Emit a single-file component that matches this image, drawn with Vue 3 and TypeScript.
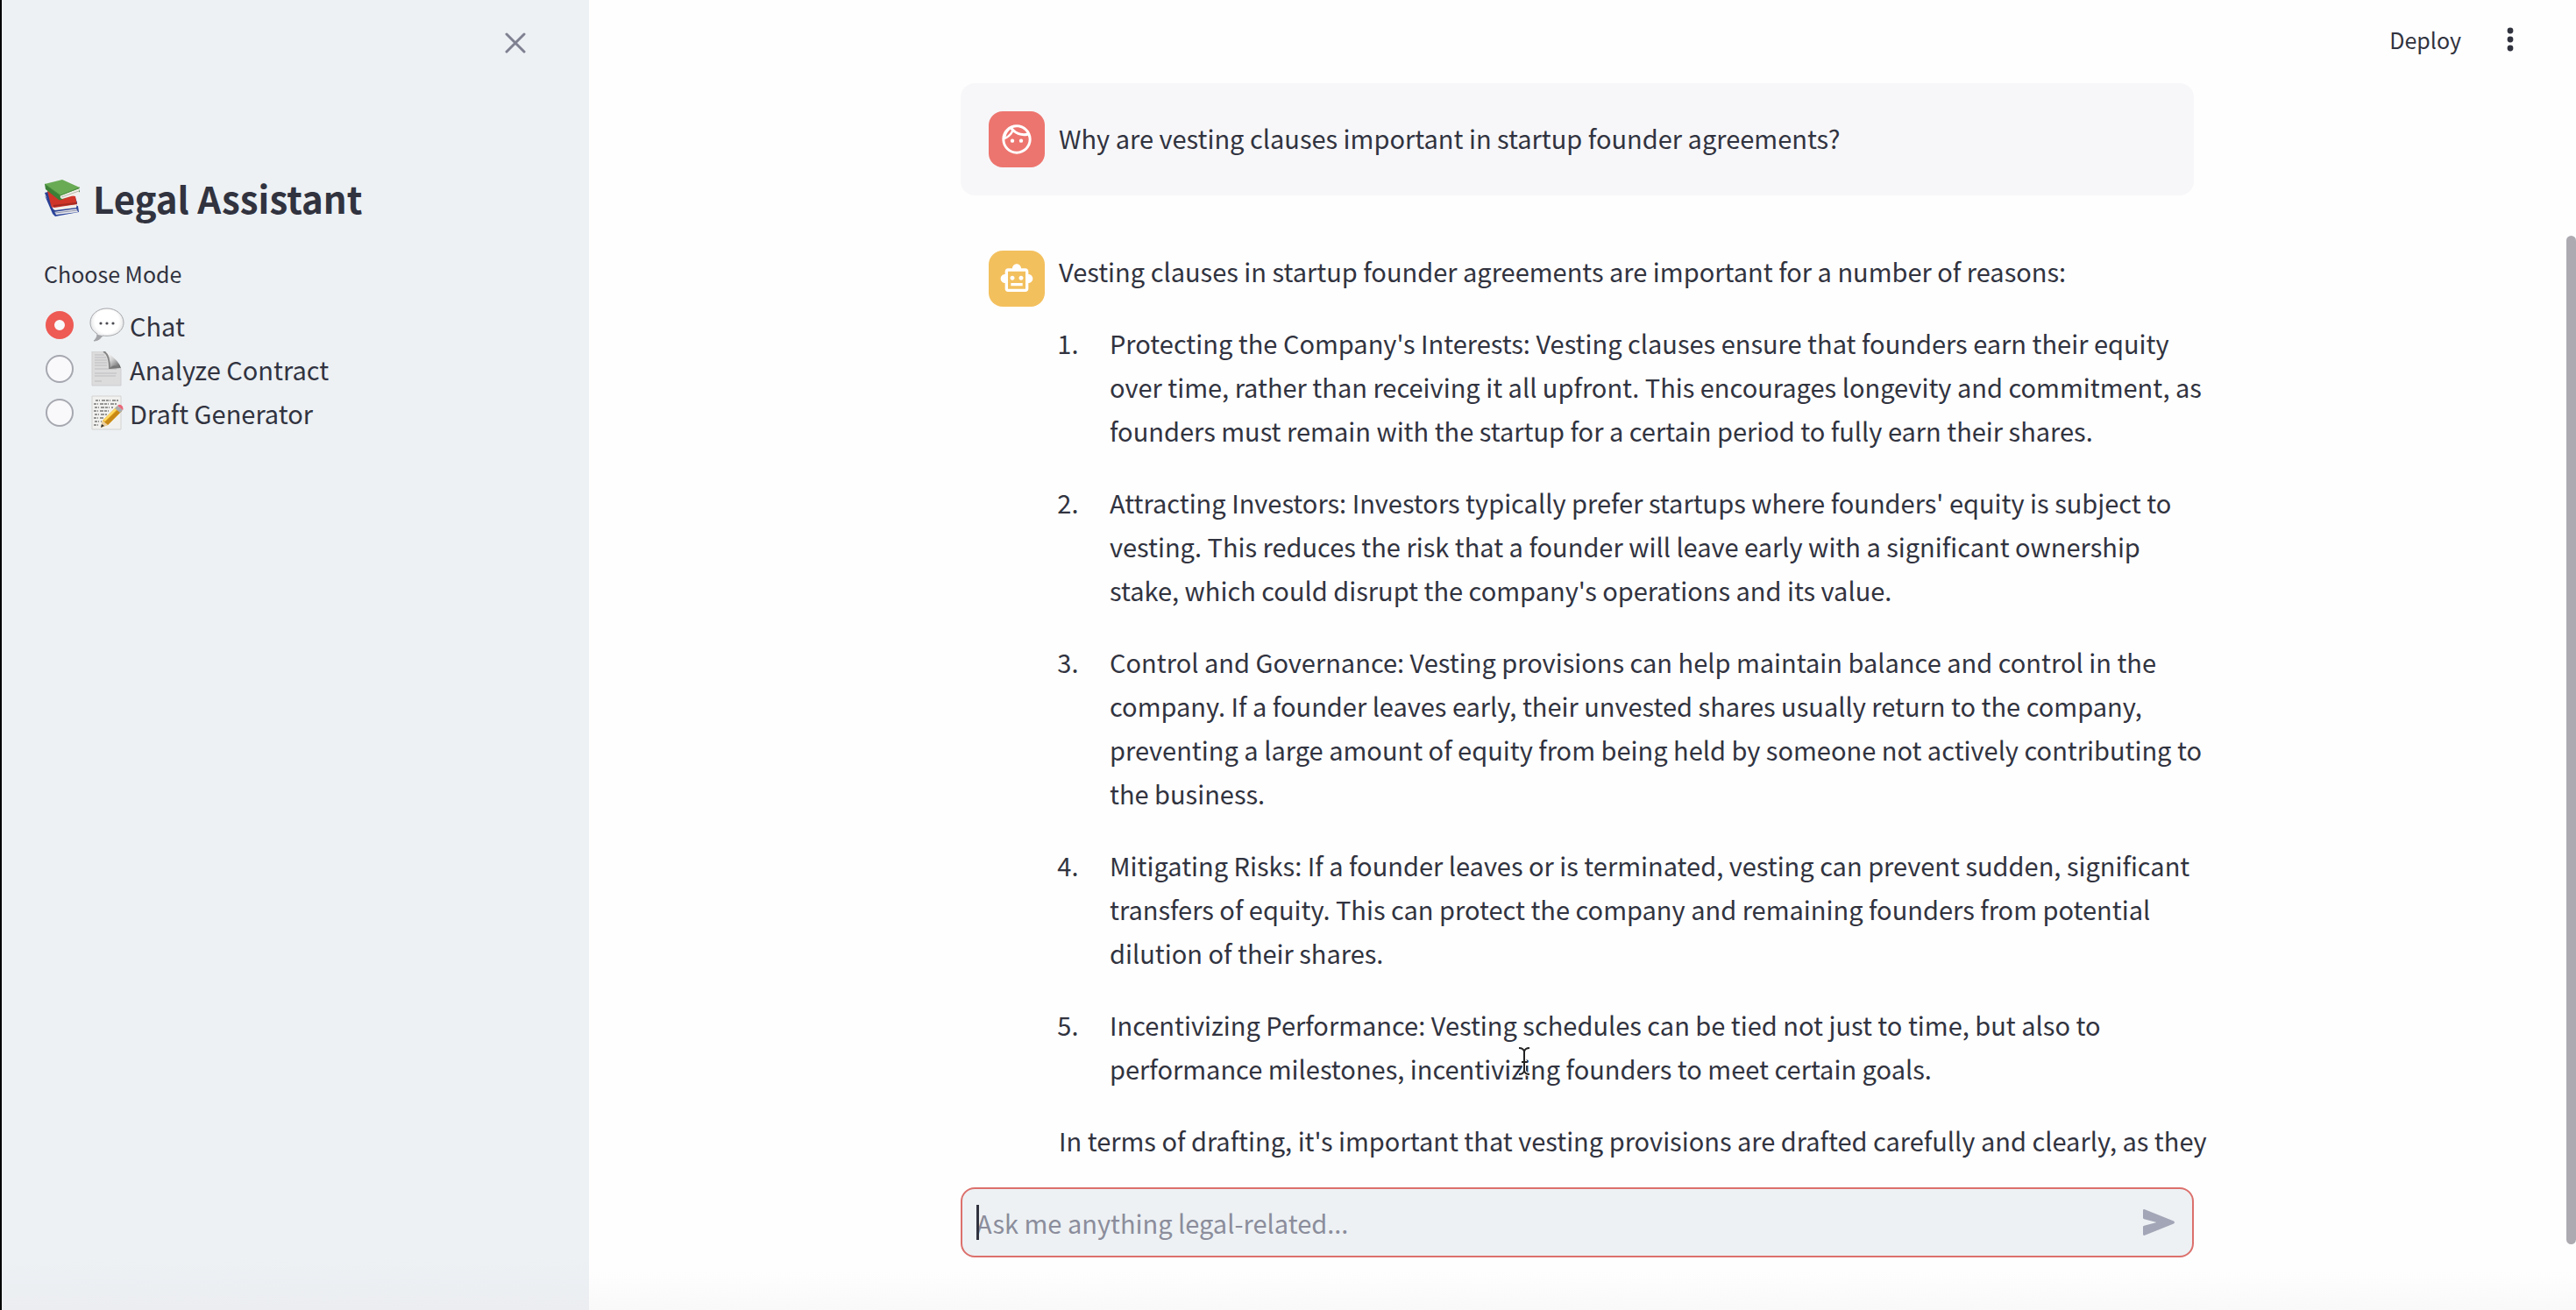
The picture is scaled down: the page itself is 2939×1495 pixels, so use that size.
<script setup lang="ts">
import { ref } from 'vue'

type Mode = 'chat' | 'analyze' | 'draft'

const mode = ref<Mode>('chat')
const question = ref('')

const modes: { id: Mode; label: string }[] = [
  { id: 'chat', label: 'Chat' },
  { id: 'analyze', label: 'Analyze Contract' },
  { id: 'draft', label: 'Draft Generator' },
]

const reasons: string[] = [
  "Protecting the Company's Interests: Vesting clauses ensure that founders earn their equity over time, rather than receiving it all upfront. This encourages longevity and commitment, as founders must remain with the startup for a certain period to fully earn their shares.",
  "Attracting Investors: Investors typically prefer startups where founders' equity is subject to vesting. This reduces the risk that a founder will leave early with a significant ownership stake, which could disrupt the company's operations and its value.",
  'Control and Governance: Vesting provisions can help maintain balance and control in the company. If a founder leaves early, their unvested shares usually return to the company, preventing a large amount of equity from being held by someone not actively contributing to the business.',
  'Mitigating Risks: If a founder leaves or is terminated, vesting can prevent sudden, significant transfers of equity. This can protect the company and remaining founders from potential dilution of their shares.',
  'Incentivizing Performance: Vesting schedules can be tied not just to time, but also to performance milestones, incentivizing founders to meet certain goals.',
]
</script>

<template>
  <div class="app">
    <aside class="sidebar">
      <div class="sidebar-top">
        <button class="icon-button" type="button" aria-label="Close sidebar">
          <svg width="24" height="24" viewBox="0 0 24 24" fill="none" stroke="#7f8191" stroke-width="3" stroke-linecap="round">
            <path d="M2 2 22 22M22 2 2 22" />
          </svg>
        </button>
      </div>

      <h1 class="title">
        <svg width="42" height="44" viewBox="0 0 42 44" aria-hidden="true">
          <path d="M1 19 12 34 39 31 40 38 13 43 10 40Z" fill="#2c459c" />
          <path d="M12 37 37 34 39 38 14 41Z" fill="#e9e9ee" />
          <path d="M13 39 38 36" stroke="#8c92aa" stroke-width="1" />
          <path d="M1 16 8 14 36 22 38 27 38 34 11 38 8 34Z" fill="#2a3f91" />
          <path d="M4 14 8 30Q9 34 12 34L38 30 36 20Z" fill="#cf3528" />
          <path d="M10 29Q9 33 12 33L38 29 37 33 13 36Q9 35 10 29Z" fill="#f1eeea" />
          <path d="M11 31 37 28" stroke="#a42a22" stroke-width="2" />
          <path d="M1 6 2 12 17 24Q20 25 22 23L41 15 40 11Z" fill="#3c7f36" />
          <path d="M19 19 41 11Q39 14 41 17L21 23Q18 22 19 19Z" fill="#f2f0e8" />
          <path d="M20 21 40 14" stroke="#b7b5ac" stroke-width="1" />
          <path d="M1 6 21 1 41 10 19 19Z" fill="#69ab55" />
          <path d="M1 6 19 19 41 10" fill="none" stroke="#4b913f" stroke-width="1" />
        </svg>
        <span>Legal Assistant</span>
      </h1>

      <fieldset class="modes">
        <legend>Choose Mode</legend>
        <label v-for="item in modes" :key="item.id" class="mode">
          <input v-model="mode" type="radio" name="mode" :value="item.id" />
          <svg v-if="item.id === 'chat'" width="40" height="40" viewBox="0 0 40 40" aria-hidden="true">
            <defs>
              <radialGradient id="bubble" cx=".5" cy=".4" r=".6">
                <stop offset=".6" stop-color="#fff" />
                <stop offset="1" stop-color="#d5d6d9" />
              </radialGradient>
            </defs>
            <path d="M20 1C9.500 1 1 8 1 17c0 6 3 10 8 13 0 4-2 6-4 8 5 0 8-3 10-6 14 2 24-5 24-15C39 8 30.500 1 20 1Z" fill="url(#bubble)" stroke="#a5a6aa" stroke-width="1" />
            <path d="M9 31c0 3-2 5-4 7 5 0 8-3 10-6Z" fill="#a2a3a7" />
            <g fill="#4b4c52">
              <circle cx="13" cy="18" r="1.600" />
              <circle cx="20" cy="18" r="1.600" />
              <circle cx="27" cy="18" r="1.600" />
            </g>
          </svg>
          <svg v-else-if="item.id === 'analyze'" width="40" height="40" viewBox="0 0 40 40" aria-hidden="true">
            <defs>
              <linearGradient id="curl" x1="0" y1="0" x2="1" y2="1">
                <stop offset=".2" stop-color="#fafafa" />
                <stop offset=".5" stop-color="#d0d0d0" />
                <stop offset="1" stop-color="#4c4c4c" />
              </linearGradient>
            </defs>
            <path d="M3 0H18Q24 4 24 15 34 15 36 20V39H3Z" fill="#dcdcdd" stroke="#cfcfd0" stroke-width="1" />
            <path d="M6 4H17M6 7H19M6 10H20M6 13H20M6 16H20M6 20H31M6 25H31M6 28H30M6 34H14" stroke="#bdbdbf" stroke-width="1" />
            <path d="M15 0Q22 1 23 8V20Q30 15 36 19 34 11 20 1Z" fill="url(#curl)" />
            <path d="M16 0Q23 3 23 20" fill="none" stroke="#858585" stroke-width="2" />
            <path d="M23 20Q27 13 36 19Z" fill="#777" />
          </svg>
          <svg v-else width="40" height="40" viewBox="0 0 40 40" aria-hidden="true">
            <path d="M3 1H36V39H3Z" fill="#f1f1ef" stroke="#d2d2d1" stroke-width="1" />
            <g fill="none" stroke="#777" stroke-width="1.500" stroke-dasharray="3 1 1 2 4 1">
              <path d="M7 6H33M5 10H31M6 14H27M5 18H24M6 22H20M5 26H17M6 30H14M5 34H12" />
            </g>
            <path d="M13 37 15 29 31 13 37 18 21 34Z" fill="#efb82f" />
            <path d="M17 31 34 15 37 18 21 34Z" fill="#c98916" />
            <path d="M17 29 32 14" stroke="#ffdc67" stroke-width="2" />
            <path d="M13 37 15 29 21 34Z" fill="#ead0a2" />
            <path d="M13 37 14 33 17 35Z" fill="#333" />
            <path d="M29 15 32 12 38 17 35 20Z" fill="#a9adb0" />
            <path d="M32 12Q35 9 38 13 39 16 38 17Z" fill="#e9697a" />
          </svg>
          <span>{{ item.label }}</span>
        </label>
      </fieldset>
    </aside>

    <main class="main">
      <header class="toolbar">
        <button class="deploy" type="button">Deploy</button>
        <button class="icon-button" type="button" aria-label="Menu">
          <svg width="8" height="28" viewBox="0 0 8 28" fill="#31333f">
            <circle cx="4" cy="4" r="3.400" />
            <circle cx="4" cy="14" r="3.400" />
            <circle cx="4" cy="24" r="3.400" />
          </svg>
        </button>
      </header>

      <div class="column">
        <article class="message user">
          <div class="avatar avatar-user">
            <svg width="40" height="40" viewBox="0 0 24 24" fill="#fff" aria-hidden="true">
              <path d="M12 2C6.480 2 2 6.480 2 12s4.480 10 10 10 10-4.480 10-10S17.520 2 12 2zm0 1.800c2.900 0 5.500 1.600 6.900 3.900-.6.100-1.200.2-1.900.2-3.100 0-5.900-1.400-7.700-3.700.9-.3 1.800-.4 2.700-.4zM7.700 5.100c.2.300.5.600.7.900C7.600 7.800 6.200 9.300 4.500 10.300c.5-2.200 1.600-4 3.200-5.200zM12 20.200c-4.500 0-8.200-3.700-8.200-8.100 2.500-.9 4.600-2.700 5.800-5 2 1.600 4.600 2.600 7.400 2.600.9 0 1.800-.1 2.600-.3.400.8.600 1.700.6 2.600 0 4.500-3.700 8.200-8.200 8.200z" />
              <circle cx="9" cy="13" r="1.300" />
              <circle cx="15" cy="13" r="1.300" />
            </svg>
          </div>
          <div class="body">
            <p>Why are vesting clauses important in startup founder agreements?</p>
          </div>
        </article>

        <article class="message">
          <div class="avatar avatar-bot">
            <svg width="40" height="40" viewBox="0 0 24 24" fill="#fff" aria-hidden="true">
              <path d="M20 9V7c0-1.100-.9-2-2-2h-3c0-1.660-1.340-3-3-3S9 3.340 9 5H6c-1.100 0-2 .9-2 2v2c-1.660 0-3 1.340-3 3s1.340 3 3 3v4c0 1.100.9 2 2 2h12c1.100 0 2-.9 2-2v-4c1.660 0 3-1.340 3-3s-1.340-3-3-3zm-2 10H6V7h12v12zm-9-6c-.83 0-1.500-.67-1.500-1.500S8.170 10 9 10s1.500.67 1.500 1.500S9.830 13 9 13zm7.500-1.500c0 .83-.67 1.500-1.500 1.500s-1.500-.67-1.500-1.500.67-1.500 1.500-1.500 1.500.67 1.500 1.500zM8 15h8v2H8v-2z" />
            </svg>
          </div>
          <div class="body">
            <p>Vesting clauses in startup founder agreements are important for a number of reasons:</p>
            <ol>
              <li v-for="reason in reasons" :key="reason">{{ reason }}</li>
            </ol>
            <p>In terms of drafting, it's important that vesting provisions are drafted carefully and clearly, as they</p>
            <svg class="pointer" width="16" height="34" viewBox="0 0 16 34" fill="none" aria-hidden="true">
              <path d="M2 2Q7 2 8 6 9 2 14 2M8 6V28M2 32Q7 32 8 28 9 32 14 32M5 18H11" stroke="#fff" stroke-width="4" />
              <path d="M2 2Q7 2 8 6 9 2 14 2M8 6V28M2 32Q7 32 8 28 9 32 14 32M5 18H11" stroke="#222" stroke-width="2" />
            </svg>
          </div>
        </article>

        <form class="composer" @submit.prevent="question = ''">
          <input v-model="question" type="text" aria-label="Legal question" placeholder="Ask me anything legal-related..." />
          <span class="caret" aria-hidden="true"></span>
          <button class="icon-button" type="submit" aria-label="Send">
            <svg width="36" height="30" viewBox="0 0 36 30" fill="#a3a6b6">
              <path d="M0 1.500Q0-.4 2 .3L35 13.500Q37 15 35 16.500L2 29.700Q0 30.400 0 28.500V20Q0 19 1.300 18.700L15.500 15 1.300 11.300Q0 11 0 10Z" />
            </svg>
          </button>
        </form>
      </div>
      <div class="scroll-thumb" aria-hidden="true"></div>
    </main>
  </div>
</template>

<style>
body {
  margin: 0;
}
</style>

<style scoped>
.app {
  display: flex;
  box-sizing: border-box;
  min-height: 100vh;
  border-left: 2px solid #000;
  background: #fefefe;
  color: #31333f;
  font-family: "Noto Sans CJK SC", "Noto Sans", sans-serif;
  font-size: 29px;
  line-height: 50px;
}

button,
input {
  font: inherit;
  color: inherit;
}

.icon-button,
.deploy {
  display: flex;
  padding: 0;
  border: 0;
  background: none;
}

.sidebar {
  flex: 0 0 670px;
  box-sizing: border-box;
  padding: 0 48px;
  background: linear-gradient(#edf1f4 96%, #ebedf1);
}

.sidebar-top {
  display: flex;
  justify-content: flex-end;
  padding: 37px 24px 0 0;
}

.title {
  display: flex;
  align-items: center;
  gap: 14px;
  margin: 135px 0 0;
  font-size: 42px;
  font-weight: 700;
  line-height: 60px;
}

.modes {
  margin: 36px 0 0;
  padding: 0;
  border: 0;
}

.modes legend {
  padding: 0 0 14px;
  font-size: 25px;
  line-height: 40px;
}

.mode {
  display: flex;
  align-items: center;
  margin-left: 2px;
}

.mode input {
  appearance: none;
  box-sizing: border-box;
  width: 32px;
  height: 32px;
  margin: 0 18px 0 0;
  border: 2px solid #a6a8b0;
  border-radius: 50%;
  background: #f9f9fb;
}

.mode input:checked {
  border: 10px solid #ee5a54;
}

.mode svg {
  margin-right: 6px;
}

.main {
  position: relative;
  display: flex;
  flex: 1;
  flex-direction: column;
  align-items: center;
  min-width: 0;
  padding: 0 12px 60px 0;
  background: linear-gradient(#fefefe 97%, #f9f9f9);
}

.toolbar {
  display: flex;
  align-items: center;
  align-self: stretch;
  justify-content: flex-end;
  gap: 52px;
  height: 90px;
  padding: 0 59px 0 0;
  box-sizing: border-box;
}

.deploy {
  font-size: 25px;
}

.column {
  display: flex;
  flex: 1;
  flex-direction: column;
  width: 100%;
  max-width: 1407px;
  padding-top: 5px;
}

.message {
  display: flex;
  align-items: flex-start;
  gap: 16px;
  padding: 32px 0 26px 32px;
}

.user {
  align-items: center;
  margin-bottom: 31px;
  padding: 32px;
  border-radius: 16px;
  background: #f7f7f9;
}

.avatar {
  display: flex;
  flex: 0 0 64px;
  align-items: center;
  justify-content: center;
  height: 64px;
  border-radius: 16px;
}

.avatar-user {
  background: #ed756f;
}

.avatar-bot {
  background: #f3c05e;
}

.body {
  position: relative;
  flex: 1;
  min-width: 0;
  margin: -2px -16px 2px 0;
}

.body p {
  margin: 0;
}

.body ol {
  margin: 32px 0;
  padding: 0;
}

.body li {
  margin: 0 0 32px 29px;
  padding-left: 29px;
}

.pointer {
  position: absolute;
  right: 772px;
  bottom: 98px;
}

.composer {
  position: relative;
  display: flex;
  align-items: center;
  box-sizing: border-box;
  height: 80px;
  margin-top: auto;
  padding: 0 20px 0 16px;
  border: 2px solid #dc706c;
  border-radius: 16px;
  background: #edf1f4;
}

.composer input {
  flex: 1;
  min-width: 0;
  padding: 0;
  border: 0;
  outline: 0;
  background: none;
}

.composer input::placeholder {
  color: #8b8d9b;
  opacity: 1;
}

.caret {
  position: absolute;
  left: 16px;
  width: 3px;
  height: 40px;
  background: #31333f;
}

.scroll-thumb {
  position: absolute;
  top: 18%;
  right: 0;
  bottom: 5%;
  width: 11px;
  border-radius: 6px;
  background: #adabb1;
}
</style>
